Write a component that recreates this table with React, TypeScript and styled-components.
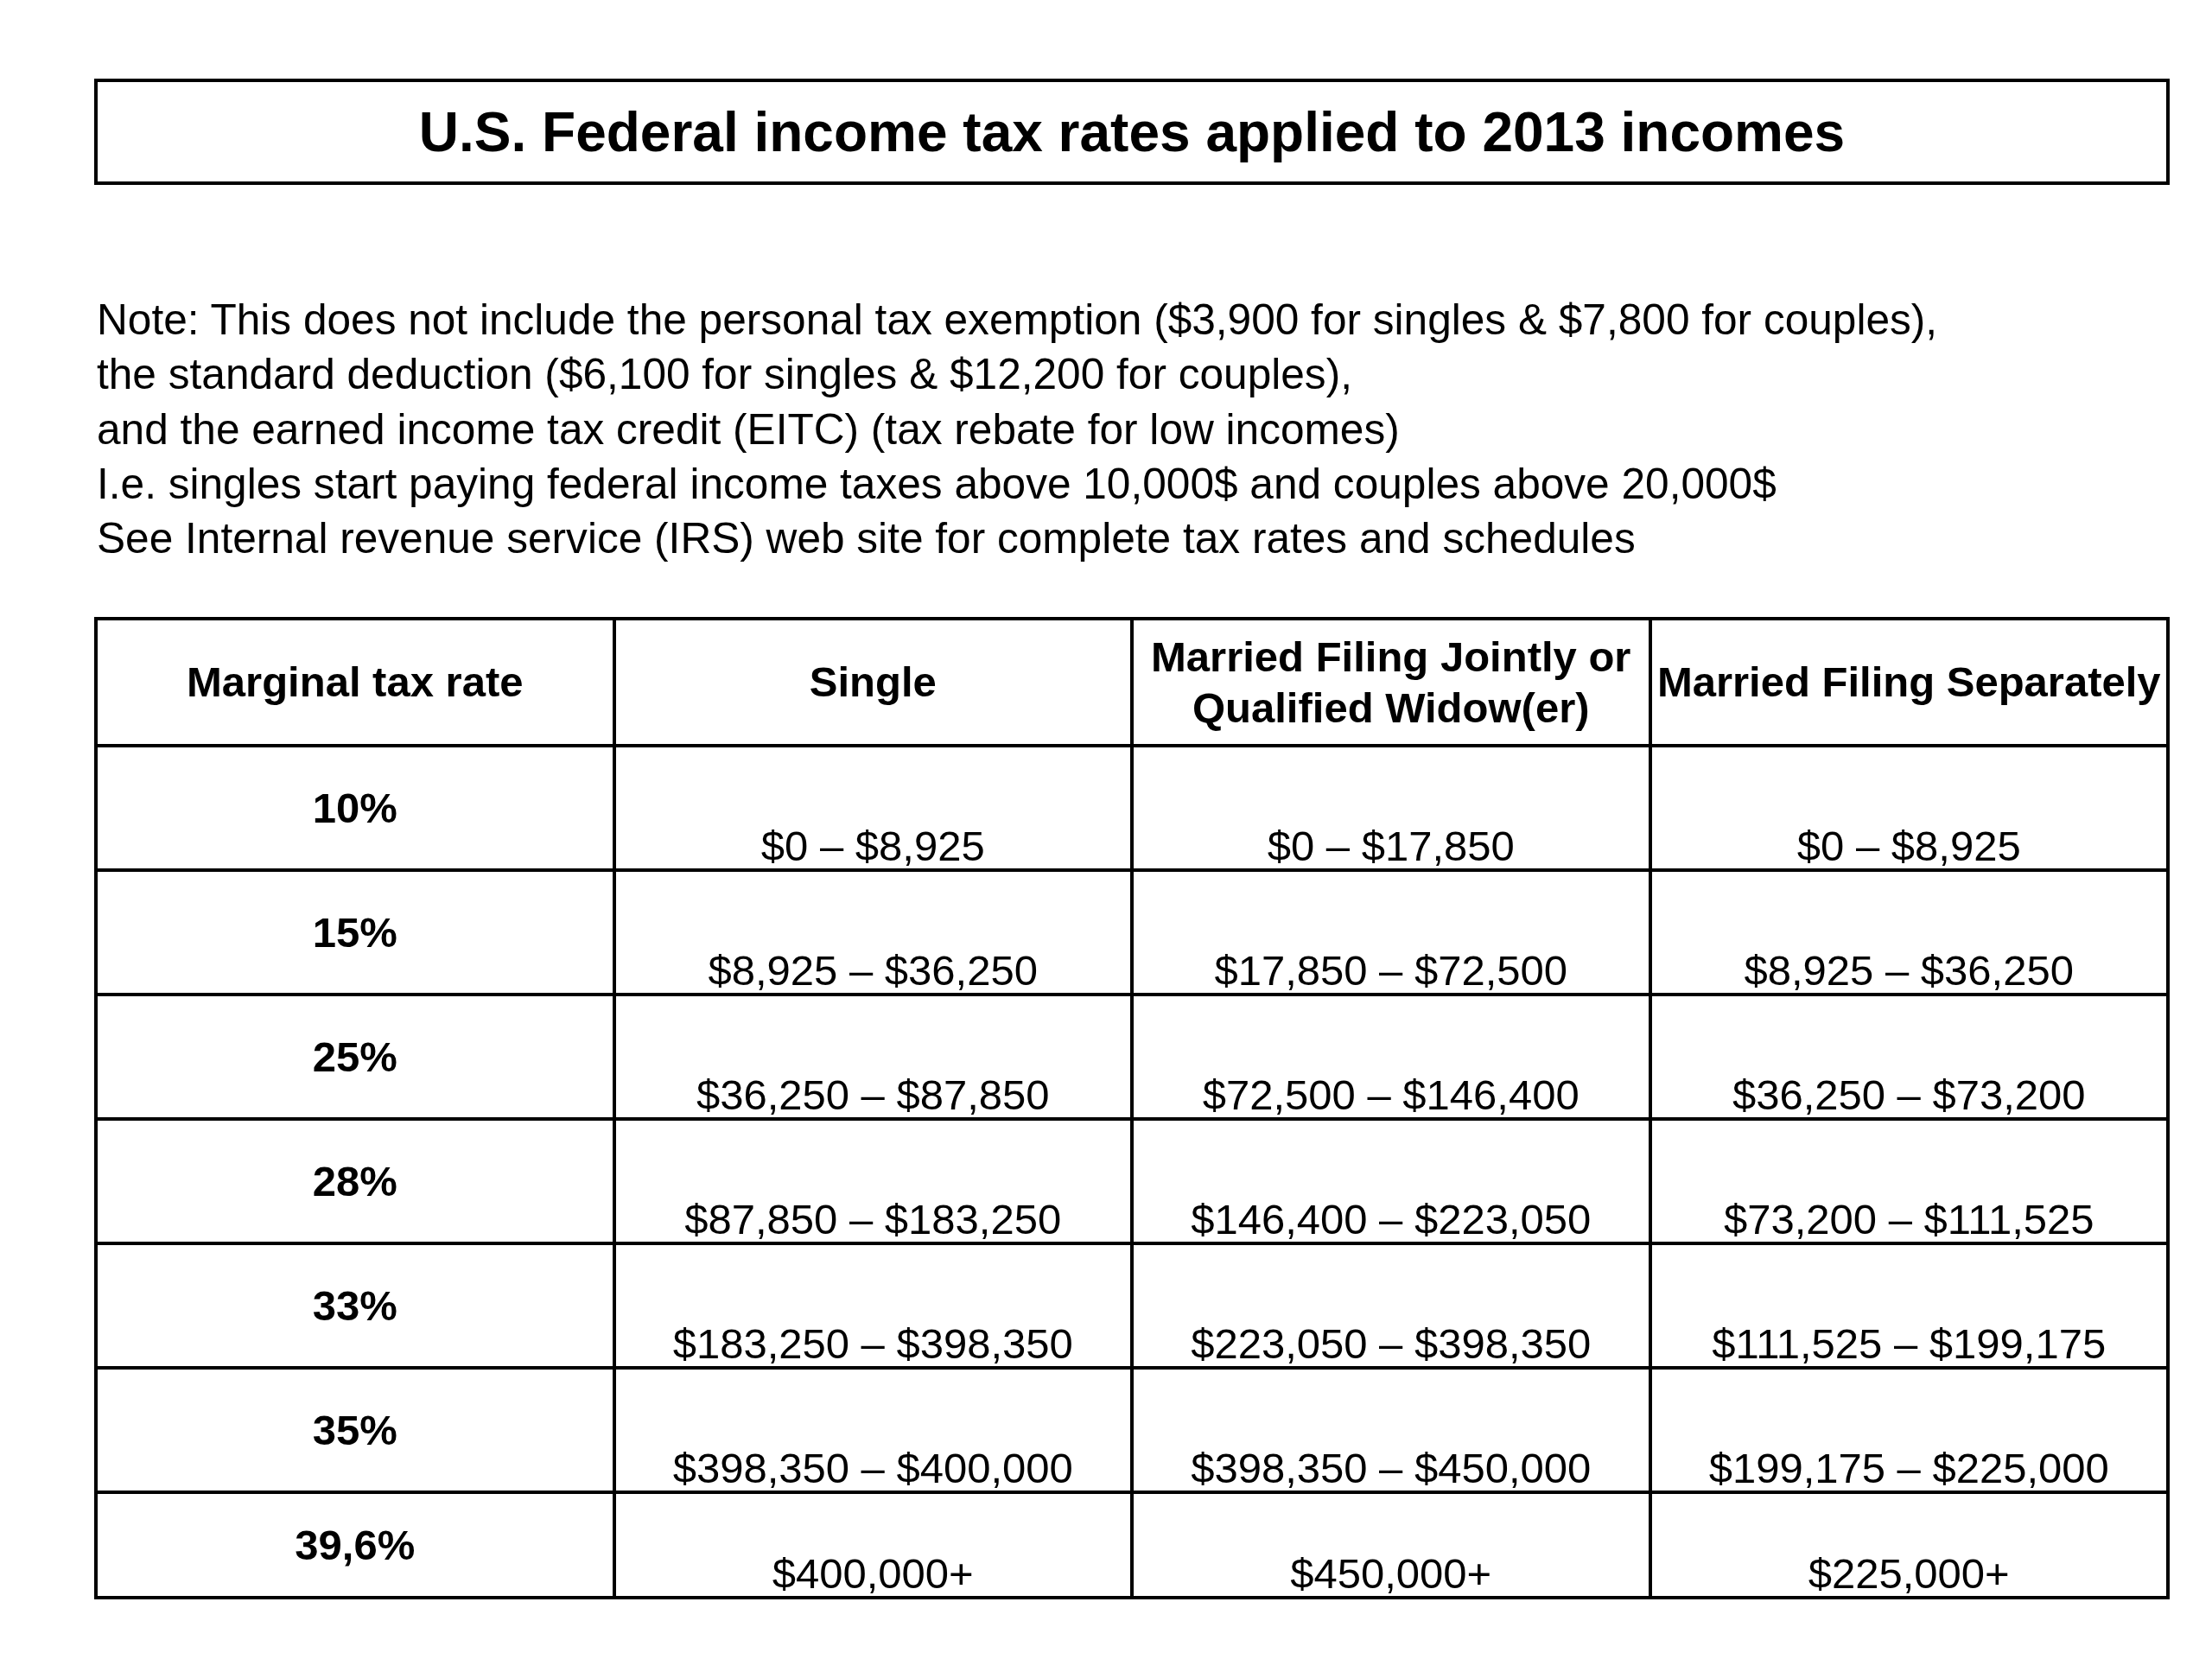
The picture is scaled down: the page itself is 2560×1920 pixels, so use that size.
import * as React from 'react';
import styled, { createGlobalStyle } from 'styled-components';

// tax bracket rows, 2013
interface Bracket {
  rate: string;
  single: string;
  joint: string;
  separate: string;
}

const brackets: Bracket[] = [
  { rate: '10%', single: '$0 – $8,925', joint: '$0 – $17,850', separate: '$0 – $8,925' },
  { rate: '15%', single: '$8,925 – $36,250', joint: '$17,850 – $72,500', separate: '$8,925 – $36,250' },
  { rate: '25%', single: '$36,250 – $87,850', joint: '$72,500 – $146,400', separate: '$36,250 – $73,200' },
  { rate: '28%', single: '$87,850 – $183,250', joint: '$146,400 – $223,050', separate: '$73,200 – $111,525' },
  { rate: '33%', single: '$183,250 – $398,350', joint: '$223,050 – $398,350', separate: '$111,525 – $199,175' },
  { rate: '35%', single: '$398,350 – $400,000', joint: '$398,350 – $450,000', separate: '$199,175 – $225,000' },
  { rate: '39,6%', single: '$400,000+', joint: '$450,000+', separate: '$225,000+' },
];

const noteLines = [
  'Note: This does not include the personal tax exemption ($3,900 for singles & $7,800 for couples),',
  'the standard deduction ($6,100 for singles & $12,200 for couples),',
  'and the earned income tax credit (EITC) (tax rebate for low incomes)',
  'I.e. singles start paying federal income taxes above 10,000$ and couples above 20,000$',
  'See Internal revenue service (IRS) web site for complete tax rates and schedules',
];

const GlobalStyle = createGlobalStyle`
  body {
    margin: 0;
    background: #fff;
    color: #000;
    font-family: "Liberation Sans", Arial, sans-serif;
  }
`;

const Page = styled.div`
  width: 2402px;
  padding: 91px 0 60px 109px;
`;

const TitleBox = styled.div`
  box-sizing: border-box;
  height: 123px;
  border: 4px solid #000;
  display: flex;
  align-items: center;
  justify-content: center;
`;

const Title = styled.h1`
  margin: 0;
  font-size: 64px;
  font-weight: bold;
  line-height: 1;
`;

const Note = styled.div`
  margin-top: 125px;
  padding-left: 3px;
  font-size: 49.6px;
  line-height: 63.3px;
`;

const Table = styled.table`
  margin-top: 59px;
  width: 2402px;
  table-layout: fixed;
  border-collapse: collapse;
  border: 4px solid #000;

  th,
  td {
    border: 4px solid #000;
    padding: 0;
    text-align: center;
    font-size: 49px;
  }
`;

const HeadRow = styled.tr`
  height: 147px;
`;

const Row = styled.tr<{ $last?: boolean }>`
  height: ${(p) => (p.$last ? '122px' : '144px')};
`;

const HeadCell = styled.th`
  font-weight: bold;
  line-height: 59px;
  vertical-align: middle;
`;

const RateCell = styled.td`
  font-weight: bold;
  line-height: 1;
  vertical-align: middle;
`;

const AmountCell = styled.td`
  line-height: 1;
  vertical-align: bottom;
  && {
    padding-bottom: 1px;
  }
`;

const App: React.FC = () => {
  return (
    <Page>
      <GlobalStyle />
      <TitleBox>
        <Title>U.S. Federal income tax rates applied to 2013 incomes</Title>
      </TitleBox>
      <Note>
        {noteLines.map((line) => (
          <div key={line}>{line}</div>
        ))}
      </Note>
      <Table>
        <thead>
          <HeadRow>
            <HeadCell>Marginal tax rate</HeadCell>
            <HeadCell>Single</HeadCell>
            <HeadCell>Married Filing Jointly or Qualified Widow(er)</HeadCell>
            <HeadCell>Married Filing Separately</HeadCell>
          </HeadRow>
        </thead>
        <tbody>
          {brackets.map((b, i) => (
            <Row key={b.rate} $last={i === brackets.length - 1}>
              <RateCell>{b.rate}</RateCell>
              <AmountCell>{b.single}</AmountCell>
              <AmountCell>{b.joint}</AmountCell>
              <AmountCell>{b.separate}</AmountCell>
            </Row>
          ))}
        </tbody>
      </Table>
    </Page>
  );
};

export default App;
